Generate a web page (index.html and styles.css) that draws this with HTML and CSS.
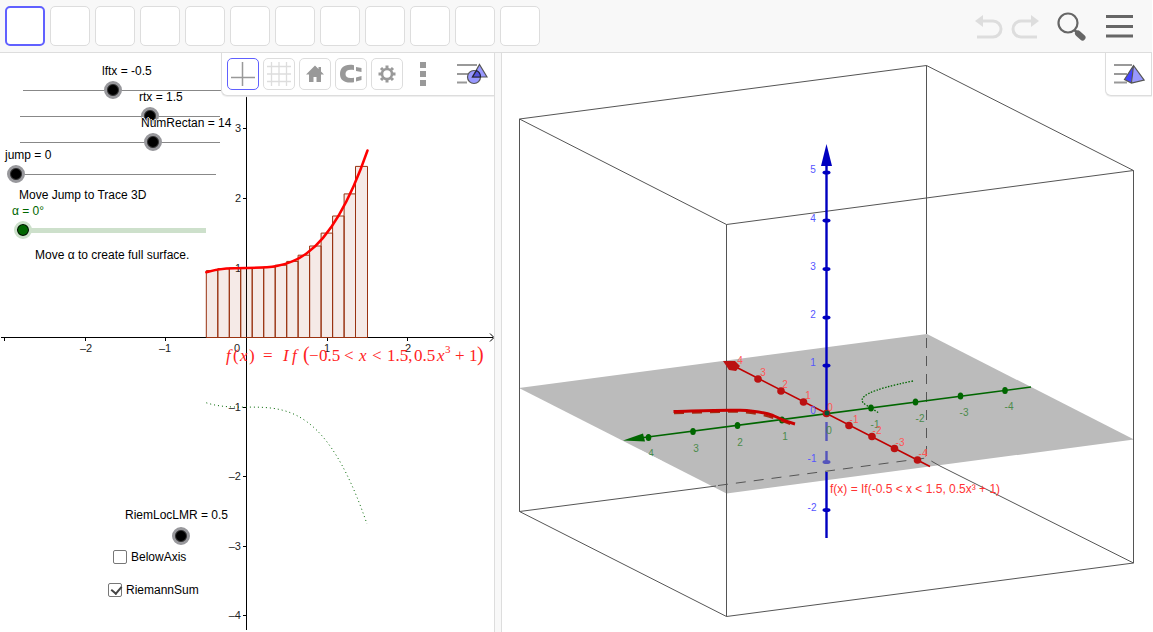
FILE: index.html
```html
<!DOCTYPE html>
<html lang="en">
<head>
<meta charset="utf-8">
<title>Riemann sums and surfaces</title>
<link rel="stylesheet" href="styles.css">
</head>
<body>
<div class="app">
  <header class="toolbar">
    <div class="tools">
      <button class="tool active" aria-label="Move"></button>
      <button class="tool" aria-label="Point"></button>
      <button class="tool" aria-label="Line"></button>
      <button class="tool" aria-label="Perpendicular"></button>
      <button class="tool" aria-label="Polygon"></button>
      <button class="tool" aria-label="Circle"></button>
      <button class="tool" aria-label="Ellipse"></button>
      <button class="tool" aria-label="Angle"></button>
      <button class="tool" aria-label="Reflect"></button>
      <button class="tool" aria-label="Text"></button>
      <button class="tool" aria-label="Slider"></button>
      <button class="tool" aria-label="Move view"></button>
    </div>
    <div class="actions">
      <button class="action undo" aria-label="Undo"><svg width="30" height="28"><path d="M9 9H19a8 8 0 0 1 0 16H3" fill="none" stroke="#ddd" stroke-width="3"/><path d="M1 9l8-6v12z" fill="#ddd"/></svg></button>
      <button class="action redo" aria-label="Redo"><svg width="30" height="28"><path d="M21 9H11a8 8 0 0 0 0 16H27" fill="none" stroke="#ddd" stroke-width="3"/><path d="M29 9l-8-6v12z" fill="#ddd"/></svg></button>
      <button class="action search" aria-label="Search"><svg width="30" height="30"><circle cx="11" cy="12" r="9.500" fill="none" stroke="#666" stroke-width="2.200"/><path d="M17.500 19l4 4" stroke="#666" stroke-width="2.500"/><path d="M21 22.500l4.500 4" stroke="#666" stroke-width="6" stroke-linecap="round"/></svg></button>
      <button class="action menu" aria-label="Menu"><svg width="28" height="24"><path d="M1 2.500h27M1 12.500h27M1 22h27" stroke="#666" stroke-width="3"/></svg></button>
    </div>
  </header>
  <main class="workspace">
    <section class="view view-2d" aria-label="Graphics">
      <svg class="scene">
        <g transform="translate(0 -53)">
          <g class="axis">
            <path d="M1 337.500H493M246.500 630V54M490 333.500l4 4-4 4"/>
            <path d="M4.500 338v3M85.500 338v3M165.500 338v3M327.500 338v3M407.500 338v3M243 128.500h3M243 198.500h3M243 268.500h3M243 407.500h3M243 476.500h3M243 546.500h3M243 615.500h3"/>
          </g>
          <g class="ticks">
            <text x="86" y="352">–2</text><text x="165" y="352">–1</text><text x="237" y="352">0</text><text x="327" y="352">1</text><text x="408" y="352">2</text>
            <g class="end"><text x="241" y="132">3</text><text x="241" y="202">2</text><text x="241" y="272">1</text><text x="241" y="411">–1</text><text x="241" y="480">–2</text><text x="241" y="550">–3</text><text x="241" y="619">–4</text></g>
          </g>
          <path class="bars" d="M206.300 337.500V270.600H217.800V337.500M217.800 268.700H229.300V337.500M217.800 337.500V268.700M229.300 337.500V268H240.700V337.500M240.700 337.500V267.900H252.200V337.500M252.200 337.500V267.800H263.700V337.500M263.700 337.500V267.100H275.200V337.500M275.200 337.500V265.200H286.700V337.500M286.700 337.500V261.400H298.100V337.500M298.100 337.500V255.200H309.600V337.500M309.600 337.500V246H321.100V337.500M321.100 337.500V233.100H332.600V337.500M332.600 337.500V216H344.100V337.500M344.100 337.500V193.900H355.500V337.500M355.500 337.500V166.400H367.500V337.500M206.300 337.500H367.500"/>
          <path class="bars-fill" d="M206 337V270.600h11.800V268.700h11.500V268H275.200V265.200h11.500V261.400h11.400V255.200h11.500V246h11.500V233.100h11.500V216h11.500V193.900h11.400V166.400h12V337z"/>
          <path class="curve" d="M206.300 272.200C259.900 254.900 313.400 307 367.500 150.500"/>
          <path class="trace" d="M206.300 402.800C259.900 420.100 313.400 368 367 524"/>
          <g class="formula">
            <text><tspan x="226" y="361" class="it">f</tspan><tspan x="233">(</tspan><tspan x="240" class="it">x</tspan><tspan x="249">)</tspan><tspan x="263">=</tspan><tspan x="283" class="it">I</tspan><tspan x="292" class="it">f</tspan><tspan x="303" class="paren">(</tspan><tspan x="309">−</tspan><tspan x="319">0.5</tspan><tspan x="344">&lt;</tspan><tspan x="359" class="it">x</tspan><tspan x="372">&lt;</tspan><tspan x="387">1.5,</tspan><tspan x="414">0.5</tspan><tspan x="437" class="it">x</tspan><tspan x="445" y="353" class="sup">3</tspan><tspan x="455" y="361">+</tspan><tspan x="469">1</tspan><tspan x="477" class="paren">)</tspan></text>
          </g>
        </g>
      </svg>

      <input class="range lftx" id="lftx" type="range" min="-5" max="5" step="0.1" value="-0.5">
      <label class="caption lftx-text" for="lftx">lftx = -0.5</label>
      <input class="range rtx" id="rtx" type="range" min="-5" max="5" step="0.1" value="1.5">
      <label class="caption rtx-text" for="rtx">rtx = 1.5</label>
      <input class="range num" id="num" type="range" min="0" max="21" value="14">
      <label class="caption num-text" for="num">NumRectan = 14</label>
      <input class="range jump" id="jump" type="range" min="0" max="10" value="0">
      <label class="caption jump-text" for="jump">jump = 0</label>
      <p class="caption note-jump">Move Jump to Trace 3D</p>
      <input class="range alpha" id="alpha" type="range" min="0" max="360" value="0">
      <label class="caption alpha-text" for="alpha">α = 0°</label>
      <p class="caption note-alpha">Move α to create full surface.</p>
      <input class="range riem" id="riem" type="range" min="0" max="1" step="0.5" value="0.5">
      <label class="caption riem-text" for="riem">RiemLocLMR = 0.5</label>
      <label class="check below"><input type="checkbox">BelowAxis</label>
      <label class="check riemann"><input type="checkbox" checked>RiemannSum</label>

      <div class="stylebar">
        <button class="style-btn active" aria-label="Axes"><svg width="24" height="24"><path d="M11.500 0v24M0 15.500h24" stroke="#999" stroke-width="1.500"/></svg></button>
        <button class="style-btn" aria-label="Grid"><svg width="24" height="24"><path d="M4.500 0v24M12 0v24M19.500 0v24M0 4.500h24M0 12h24M0 19.500h24" stroke="#ddd" stroke-width="1.300"/></svg></button>
        <button class="style-btn" aria-label="Standard view"><svg width="24" height="24"><path d="M12 3.500L3 12.500h3V20h4.500v-5h3v5H18v-7.500h3l-3-3V5h-2.500v2z" fill="#999"/></svg></button>
        <button class="style-btn" aria-label="Point capturing"><svg width="24" height="24"><path d="M15.500 5.500C8 3.500 3.500 6.500 3.500 12S8 20.500 15.500 18.500" fill="none"/><path d="M15 3.200C6 1.500 1 5.500 1 12s5 9.500 14 8.300v-4.600C9.500 16.800 6.500 15.500 6.500 12S9.500 7 15 8z" fill="#999"/><path d="M17 5l5.500 1v4L17 9zM17 15.500l5.500-1.500v4L17 19.500z" fill="#999"/></svg></button>
        <button class="style-btn" aria-label="Settings"><svg width="24" height="24"><circle cx="12" cy="12" r="5" fill="none" stroke="#999" stroke-width="2.600"/><path d="M12 6V3.500M12 18v2.500M6 12H3.500M18 12h2.500M7.800 7.800L6 6M16.200 7.800L18 6M7.800 16.200L6 18M16.200 16.200L18 18" stroke="#999" stroke-width="3"/></svg></button>
        <button class="more-btn" aria-label="More"><svg width="6" height="24"><path d="M0 0h6v6H0zM0 9h6v6H0zM0 18h6v6H0z" fill="#999"/></svg></button>
        <button class="toggle-btn" aria-label="Toggle style bar"><svg width="32" height="24"><path d="M1 3h20M1 12h11M1 20.500h10" stroke="#999" stroke-width="2"/><circle cx="18" cy="15" r="6.500" fill="#99f" stroke="#555" stroke-width="1.200"/><path d="M23.500 2.500l7.500 12.500h-14.500z" fill="#8080ff" fill-opacity=".8" stroke="#555" stroke-width="1.200"/><path d="M16.500 15l4-6.500q4 2 4 6.500z" fill="#55d" stroke="#223" stroke-width="1.200"/></svg></button>
      </div>
    </section>

    <div class="divider"></div>

    <section class="view view-3d" aria-label="3D Graphics">
      <svg class="scene">
        <defs>
          <ellipse id="bt" rx="4" ry="2"/>
          <ellipse id="gt" rx="2.800" ry="3.600"/>
          <circle id="rt" r="3.800"/>
        </defs>
        <g transform="translate(-502 -53)">
          <path d="M519 388L927 334L1134 439.500L726.500 493.500z" fill="#bbb"/>
          <g class="box">
            <path d="M519.500 119L926.500 65.500L1133.500 170.500L726.500 224.500zM519.500 119V511.500L726.500 616.500L1133.500 563V170.500M726.500 224.500V616.500M926.500 65.500V334M519.500 511.500L716 486M940 466L1133.500 563"/>
            <path class="dashed" d="M926.500 338V458M718 485.500L926 458L940 466"/>
          </g>
          <g fill="#060" stroke="#060">
            <path d="M640 438L1031 387" stroke-width="1.600"/>
            <path d="M623 440.500L643 433.500L645 441.500z" stroke="none"/>
            <g stroke="none"><use href="#gt" x="648.500" y="437.500"/><use href="#gt" x="693" y="431.500"/><use href="#gt" x="737.500" y="425.500"/><use href="#gt" x="782" y="420"/><use href="#gt" x="871" y="408"/><use href="#gt" x="915.500" y="402"/><use href="#gt" x="960.500" y="396"/><use href="#gt" x="1005" y="390.500"/></g>
          </g>
          <path d="M913 381Q848 394 866 405L879 413" fill="none" stroke="#060" stroke-width="1.300" stroke-dasharray="1.500 1.500"/>
          <path d="M826.500 165V413M826.500 472V538" stroke="#0000c0" stroke-width="2.400"/>
          <path d="M826.500 422V441M826.500 451V464" stroke="#55b" stroke-width="2.400"/>
          <path d="M826.500 144L832 166h-11z" fill="#0000c0"/>
          <g fill="#0000c0"><use href="#bt" x="826.500" y="172.500"/><use href="#bt" x="826.500" y="220.500"/><use href="#bt" x="826.500" y="269"/><use href="#bt" x="826.500" y="317.500"/><use href="#bt" x="826.500" y="365.500"/><use href="#bt" x="826.500" y="510"/><use href="#bt" x="826.500" y="462" fill="#55b"/></g>
          <path d="M733 365.500L930 466.500" stroke="#c00000" stroke-width="1.600"/>
          <path d="M723 361L735 361L740 366L736 371L729 370z" fill="#b11"/>
          <g fill="#b11"><use href="#rt" x="758" y="379"/><use href="#rt" x="781" y="391"/><use href="#rt" x="803.500" y="402"/><use href="#rt" x="849" y="425.500"/><use href="#rt" x="872" y="436.500"/><use href="#rt" x="894.500" y="448.500"/><use href="#rt" x="917.500" y="460"/><use href="#rt" x="826.500" y="413.500"/></g>
          <circle cx="827" cy="413" r="2.500" fill="#053"/>
          <path d="M674 413L730 411.500Q762 411 794 425.500" fill="none" stroke="#a42a10" stroke-width="2.500" stroke-dasharray="10 8"/>
          <path d="M673.500 411.500C725 410 752 408 773 415.500Q784 421 795 424" fill="none" stroke="#c80000" stroke-width="3"/>
          <g class="num3d blue"><text x="813" y="173">5</text><text x="813" y="222">4</text><text x="813" y="270">3</text><text x="813" y="318">2</text><text x="813" y="366">1</text><text x="813" y="414">0</text><text x="812" y="462">-1</text><text x="812" y="511">-2</text></g>
          <g class="num3d green"><text x="651" y="457">4</text><text x="696" y="452">3</text><text x="740" y="446">2</text><text x="785" y="440">1</text><text x="829" y="434">0</text><text x="875" y="428">-1</text><text x="920" y="422">-2</text><text x="964" y="416">-3</text><text x="1009" y="410">-4</text></g>
          <path d="M640 449.700L662 460.900V464H640z" fill="#fff"/>
          <g class="num3d red"><text x="740" y="364">4</text><text x="763" y="376">3</text><text x="785" y="388">2</text><text x="808" y="399">1</text><text x="830" y="411">0</text><text x="854" y="423">-1</text><text x="877" y="434">-2</text><text x="900" y="446">-3</text><text x="923" y="457">-4</text></g>
          <text class="label3d" x="830" y="493">f(x) = If(-0.5 &lt; x &lt; 1.5, 0.5x³ + 1)</text>
        </g>
      </svg>
      <div class="stylebar stylebar-3d">
        <button class="toggle-btn" aria-label="Toggle 3D style bar"><svg width="32" height="24"><path d="M1 3h18M1 12h13M1 20.500h13" stroke="#999" stroke-width="2"/><path d="M20.500 3.500L31 18l-12 3z" fill="#99f"/><path d="M20.500 3.500L11.500 17.500l7 3.500z" fill="#44f"/><path d="M20.500 3.500L11.500 17.500l7 3.500L31 18zL18.500 21" fill="none" stroke="#555" stroke-width="1.200"/></svg></button>
      </div>
    </section>
  </main>
</div>
</body>
</html>
```
FILE: styles.css
```css
* { box-sizing: border-box; }
body {
  margin: 0;
  font-family: "Liberation Sans", Arial, sans-serif;
  font-size: 12px;
  color: #000;
  background: #fff;
}
button { margin: 0; padding: 0; border: 0; background: none; }
svg { display: block; }
.app { display: flex; flex-direction: column; height: 100vh; padding-right: 1px; }

.toolbar {
  display: flex;
  justify-content: space-between;
  align-items: center;
  padding: 6px 19px 6px 5px;
  background: #f8f8f8;
  border-bottom: 1px solid #ddd;
}
.tools { display: flex; gap: 5px; }
.tool {
  width: 40px;
  height: 40px;
  background: #fff;
  border: 1px solid #ddd;
  border-radius: 5px;
}
.tool.active { border: 2px solid #6060ff; }
.actions { display: flex; align-items: center; }
.redo { margin-left: 6px; }
.search { margin-left: 17px; }
.menu { margin-left: 18px; }

.workspace { display: flex; flex: 1; min-height: 0; }
.view { position: relative; overflow: hidden; background: #fff; }
.view-2d { flex: 494; }
.view-3d { flex: 650; }
.divider {
  flex: none;
  width: 8px;
  background: #f8f8f8;
  border: solid #ddd;
  border-width: 0 1px;
}
.scene { position: absolute; inset: 0; width: 100%; height: 100%; }

.axis path { fill: none; stroke: #000; stroke-width: 1; }
.ticks text { font-size: 11px; text-anchor: middle; fill: #222; }
.ticks .end text { text-anchor: end; }
.bars { fill: none; stroke: #993311; stroke-width: 1; }
.bars-fill { fill: #993311; fill-opacity: 0.1; }
.curve { fill: none; stroke: #f00; stroke-width: 2.5; stroke-linecap: round; }
.trace { fill: none; stroke: #060; stroke-width: 1; stroke-dasharray: 1 3; }
.formula text { font-family: "Liberation Serif", serif; font-size: 17px; fill: #f22; }
.formula .it { font-style: italic; }
.formula .sup { font-size: 11px; }
.formula .paren { font-size: 20px; }

.box path { fill: none; stroke: #555; stroke-width: 1; }
.box .dashed { stroke-dasharray: 10 8; }
.num3d text { font-size: 10px; text-anchor: middle; }
.blue { fill: #55f; }
.green { fill: #4b8b4b; }
.red { fill: #ff5555; }
.label3d { font-size: 12px; fill: #f33; }

.caption, .check { position: absolute; margin: 0; line-height: 14px; white-space: nowrap; }
.caption { text-shadow: 0 0 1px #fff, 1px 0 #fff, -1px 0 #fff, 0 1px #fff, 0 -1px #fff, 0 2px #fff; }
.range {
  position: absolute;
  width: 218px;
  height: 18px;
  margin: 0;
  appearance: none;
  background: linear-gradient(#888, #888) center / calc(100% - 18px) 1px no-repeat;
}
.range::-webkit-slider-thumb {
  appearance: none;
  width: 18px;
  height: 18px;
  border: 3px solid #98989c;
  border-radius: 50%;
  background: #000;
  box-shadow: inset 0 0 0 1px #333;
}
.lftx { left: 14px; top: 28px; }
.lftx-text { left: 102px; top: 11px; }
.rtx { left: 11px; top: 54px; }
.rtx-text { left: 139px; top: 37px; }
.num { left: 11px; top: 80px; }
.num-text { left: 141px; top: 63px; }
.jump { left: 7px; top: 112px; }
.jump-text { left: 5px; top: 95px; }
.note-jump { left: 19px; top: 135px; }
.alpha {
  left: 14px;
  top: 168px;
  width: 201px;
  background: linear-gradient(#cde0cb, #cde0cb) center / calc(100% - 18px) 5px no-repeat;
}
.alpha::-webkit-slider-thumb {
  border-color: #cde0cb;
  background: #060;
  box-shadow: inset 0 0 0 1px #000;
}
.alpha-text { left: 12px; top: 151px; color: #060; }
.note-alpha { left: 35px; top: 195px; }
.riem { left: 171px; top: 474px; width: 20px; }
.riem-text { left: 125px; top: 455px; }

.check { display: flex; align-items: center; gap: 4px; }
.check input {
  appearance: none;
  width: 14px;
  height: 14px;
  margin: 0;
  border: 1px solid #777;
  border-radius: 2px;
  background: #fff;
}
.check input:checked::before {
  content: "";
  display: block;
  width: 5px;
  height: 8px;
  margin: 0 0 0 4px;
  border: solid #444;
  border-width: 0 2px 2px 0;
  transform: rotate(40deg);
}
.below { left: 113px; top: 497px; }
.riemann { left: 108px; top: 530px; }

.stylebar {
  position: absolute;
  top: 0;
  right: 0;
  display: flex;
  align-items: center;
  gap: 4px;
  height: 43px;
  padding: 0 6px 1px 5px;
  background: #fff;
  border: solid #ddd;
  border-width: 0 0 1px 1px;
  border-radius: 0 0 0 6px;
  box-shadow: 0 1px 1px #eee;
}
.style-btn {
  display: grid;
  place-items: center;
  width: 32px;
  height: 32px;
  border: 1px solid #ddd;
  border-radius: 5px;
}
.style-btn.active { border-color: #6060ff; }
.more-btn { display: grid; place-items: center; width: 32px; height: 32px; }
.toggle-btn { margin-left: 13px; }
.stylebar-3d { padding: 0 6px 1px 7px; border-width: 0 1px 1px 1px; }
.stylebar-3d .toggle-btn { margin: 0; }
```
